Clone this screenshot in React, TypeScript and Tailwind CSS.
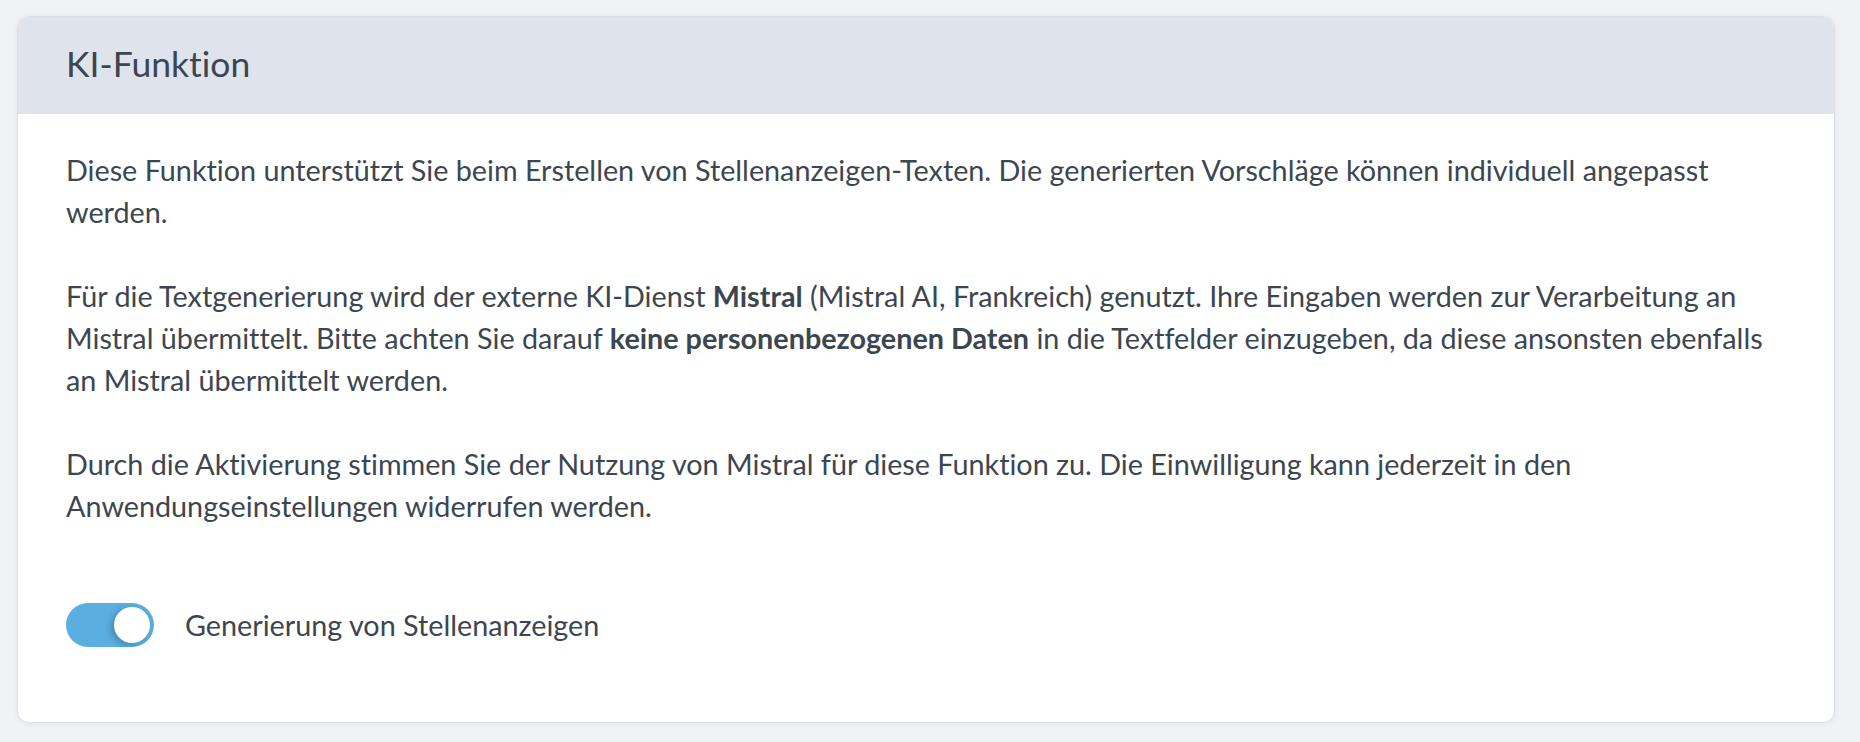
import React, { useState } from "react";

function Toggle({ on, onChange }: { on: boolean; onChange: () => void }) {
  return (
    <button
      type="button"
      onClick={onChange}
      className={`relative flex h-[44px] w-[88px] shrink-0 items-center rounded-full p-[4px] ${
        on ? "justify-end bg-[#5aaee0]" : "justify-start bg-[#cfd5de]"
      }`}
    >
      <span className="block h-[36px] w-[36px] rounded-full bg-white shadow-[-3px_2px_6px_rgba(0,0,0,0.22)]" />
    </button>
  );
}

export default function App() {
  const [on, setOn] = useState(true);
  return (
    <div className="min-h-[742px] bg-[#f1f2f5] pl-[17px] pr-[25px] pt-[16px] font-['Lato',_'Liberation_Sans',_sans-serif] text-[#3c4650] [font-variant-ligatures:no-common-ligatures]">
      <div className="overflow-hidden rounded-[12px] border border-[#dce1e8] bg-white shadow-[0_1px_4px_rgba(40,50,70,0.08)]">
        <div className="flex h-[97px] items-center bg-[#dfe3eb] px-12 pb-[3px]">
          <h2 className="text-[35.5px] leading-[42px] font-normal">KI-Funktion</h2>
        </div>
        <div className="px-12 pt-[35px] pb-[75px] text-[28.75px] leading-[42px]">
          <div className="flex flex-col gap-[42px]">
            <p>
              Diese Funktion unterstützt Sie beim Erstellen von Stellenanzeigen-Texten. Die generierten Vorschläge können individuell angepasst
              <br />
              werden.
            </p>
            <p>
              Für die Textgenerierung wird der externe KI-Dienst <strong className="font-bold">Mistral</strong> (Mistral AI, Frankreich) genutzt. Ihre Eingaben werden zur Verarbeitung an
              <br />
              Mistral übermittelt. Bitte achten Sie darauf <strong className="font-bold">keine personenbezogenen Daten</strong> in die Textfelder einzugeben, da diese ansonsten ebenfalls
              <br />
              an Mistral übermittelt werden.
            </p>
            <p>
              Durch die Aktivierung stimmen Sie der Nutzung von Mistral für diese Funktion zu. Die Einwilligung kann jederzeit in den
              <br />
              Anwendungseinstellungen widerrufen werden.
            </p>
          </div>
          <label className="mt-[76px] flex items-center gap-[31px]">
            <Toggle on={on} onChange={() => setOn(!on)} />
            <span>Generierung von Stellenanzeigen</span>
          </label>
        </div>
      </div>
    </div>
  );
}
